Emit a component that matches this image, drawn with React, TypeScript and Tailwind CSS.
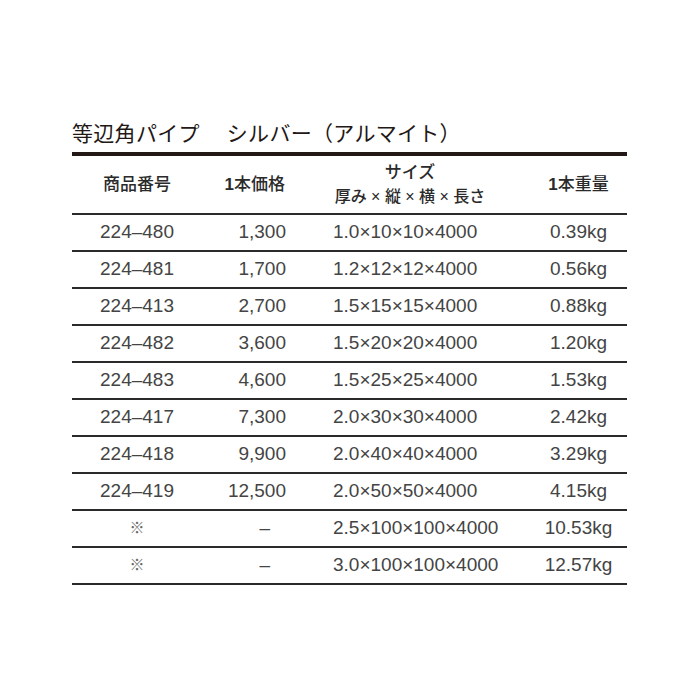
import React from "react";

interface Row {
  code: string;
  price: string;
  size: string;
  weight: string;
}

const rows: Row[] = [
  { code: "224–480", price: "1,300", size: "1.0×10×10×4000", weight: "0.39kg" },
  { code: "224–481", price: "1,700", size: "1.2×12×12×4000", weight: "0.56kg" },
  { code: "224–413", price: "2,700", size: "1.5×15×15×4000", weight: "0.88kg" },
  { code: "224–482", price: "3,600", size: "1.5×20×20×4000", weight: "1.20kg" },
  { code: "224–483", price: "4,600", size: "1.5×25×25×4000", weight: "1.53kg" },
  { code: "224–417", price: "7,300", size: "2.0×30×30×4000", weight: "2.42kg" },
  { code: "224–418", price: "9,900", size: "2.0×40×40×4000", weight: "3.29kg" },
  { code: "224–419", price: "12,500", size: "2.0×50×50×4000", weight: "4.15kg" },
  { code: "※", price: "–", size: "2.5×100×100×4000", weight: "10.53kg" },
  { code: "※", price: "–", size: "3.0×100×100×4000", weight: "12.57kg" },
];

const jp = "font-['Liberation_Sans','Noto_Sans_CJK_JP',sans-serif]";
const cols = "grid grid-cols-[130px_104px_224px_97px]";

export default function App() {
  return (
    <div className={`w-[700px] h-[700px] bg-white pt-[119px] pl-[72px] ${jp}`}>
      <div className="w-[555px]">
        <div className="flex h-[26px] leading-[26px] text-[21px] text-[#231815] font-['Noto_Sans_CJK_JP',sans-serif] mb-[7px] whitespace-pre tracking-[0.3px]">
          <span>等辺角パイプ</span>
          <span className="ml-[27px]">シルバー（アルマイト）</span>
        </div>
        <div className="h-[4px] bg-[#231815]" />

        <div className={`${cols} h-[59px] items-center border-b-2 border-[#2a2a2a] text-[17px] text-[#2a2a2a] font-medium`}>
          <div className="text-center">商品番号</div>
          <div className="text-right pr-[21px]">
            <span className="font-bold">1</span>本価格
          </div>
          <div className="text-center pr-[16px] leading-[24px]">
            <div>サイズ</div>
            <div className="text-[16px]">厚み × 縦 × 横 × 長さ</div>
          </div>
          <div className="text-center">
            <span className="font-bold">1</span>本重量
          </div>
        </div>

        {rows.map((item, index) => (
          <div
            key={`row-${index}`}
            className={`${cols} h-[37px] items-center border-b-2 border-[#2a2a2a] text-[19px] text-[#444]`}
          >
            <div className={item.code === "※" ? "text-center text-[15px] text-[#666]" : "text-center"}>
              {item.code}
            </div>
            <div className={item.price === "–" ? "text-right pr-[36px]" : "text-right pr-[20px]"}>
              {item.price}
            </div>
            <div className="pl-[27px]">{item.size}</div>
            <div className="text-center">{item.weight}</div>
          </div>
        ))}
      </div>
    </div>
  );
}
